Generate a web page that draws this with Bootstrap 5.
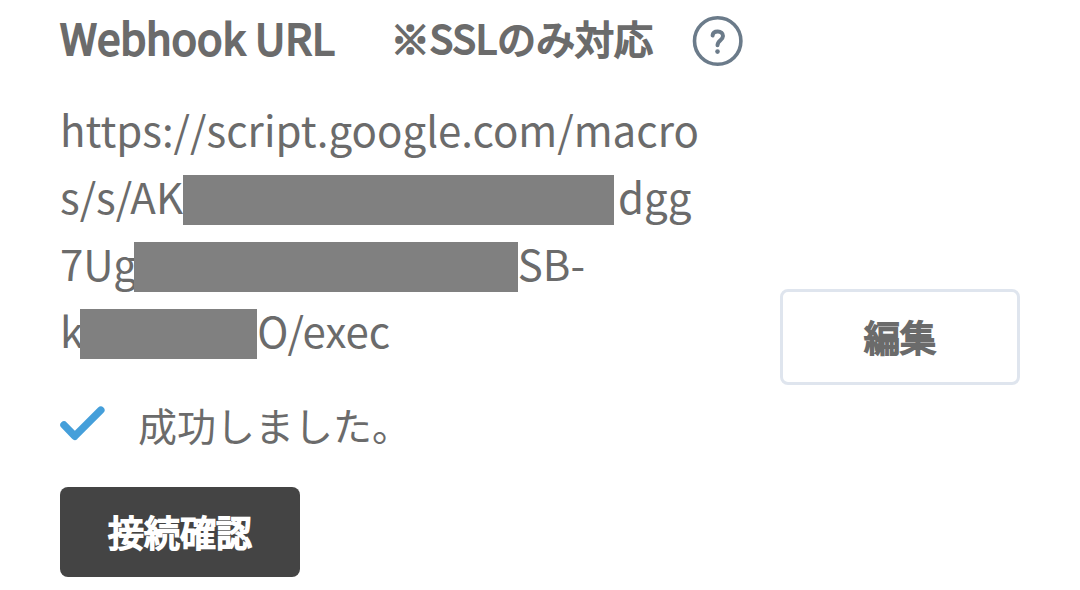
<!DOCTYPE html>
<html lang="ja">
<head>
<meta charset="utf-8">
<meta name="viewport" content="width=device-width, initial-scale=1">
<title>Webhook URL</title>
<link href="https://cdn.jsdelivr.net/npm/bootstrap@5.3.0/dist/css/bootstrap.min.css" rel="stylesheet">
<style>
  body { font-family: "Noto Sans CJK JP", sans-serif; color: #6b6b6b; background: #fff; }
  .webhook { padding: 8px 60px 12px; }
  .heading-row { gap: 56px; height: 66px; }
  .heading-text, .note-text { font-weight: 400; -webkit-text-stroke: 2px currentColor; line-height: 58px; white-space: nowrap; margin: 0 0 8px; }
  .heading-text { font-size: 42px; }
  .note-text { font-size: 39px; }
  .note-group { gap: 39px; }
  .help-btn { color: #6b7b8a; line-height: 0; }
  .url-col { padding: 21px 0 22px; }
  .url-line { font-size: 42px; line-height: 67px; height: 67px; white-space: nowrap; }
  .redacted { background: #808080; height: 50px; margin-top: 9px; position: relative; }
  .redacted-tight { margin-left: -3px; }
  .status { font-size: 39px; line-height: 58px; gap: 33px; margin-top: 10px; }
  .btn-box { width: 240px; font-size: 36px; font-weight: 400; -webkit-text-stroke: 2px currentColor; line-height: 54px; border-radius: 8px; }
  .btn-edit, .btn-edit:hover { color: #6b6b6b; border: 3px solid #dfe5ee; background: #fff; padding: 17px 0 19px; }
  .btn-verify, .btn-verify:hover { color: #fff; background: #444; border: 0; padding: 17px 0 19px; margin-top: 34px; }
</style>
</head>
<body>
<main class="webhook">
  <div class="d-flex align-items-center heading-row">
    <h1 class="heading-text">Webhook URL</h1>
    <div class="d-flex align-items-center note-group">
      <p class="note-text">※SSLのみ対応</p>
      <button type="button" class="btn p-0 border-0 help-btn" aria-label="ヘルプ">
        <svg width="52" height="52" viewBox="0 0 52 52" fill="none" stroke="currentColor" stroke-linecap="round">
          <circle cx="25.700" cy="26" r="23.200" stroke-width="3.600"/>
          <path d="M20.600 20.500C20.800 18 22.900 16.500 25.800 16.500C28.900 16.500 31 18.300 31 21C31 25 25.500 25.400 25.500 30.200" stroke-width="4"/>
          <circle cx="25.500" cy="36.600" r="2.300" fill="currentColor" stroke="none"/>
        </svg>
      </button>
    </div>
  </div>
  <div class="d-flex justify-content-between align-items-end">
    <div class="url-col">
      <div class="url-line">https://script.google.com/macro</div>
      <div class="url-line d-flex align-items-center">s/s/AK<span class="redacted me-1" style="width:431px"></span>dgg</div>
      <div class="url-line d-flex align-items-center">7Ug<span class="redacted redacted-tight" style="width:384px"></span>SB-</div>
      <div class="url-line d-flex align-items-center">k<span class="redacted redacted-tight" style="width:177px"></span>O/exec</div>
    </div>
    <button type="button" class="btn btn-box btn-edit">編集</button>
  </div>
  <div class="d-flex align-items-center status" role="status">
    <svg width="45" height="36" viewBox="0 0 45 36" fill="none" stroke="#459fda" stroke-width="7.500" stroke-linecap="round" stroke-linejoin="round" aria-hidden="true">
      <path d="M4 19L14.800 30.200L40.800 4.200"/>
    </svg>
    <span>成功しました。</span>
  </div>
  <button type="button" class="btn btn-box btn-verify">接続確認</button>
</main>
<script src="https://cdn.jsdelivr.net/npm/bootstrap@5.3.0/dist/js/bootstrap.bundle.min.js"></script>
</body>
</html>
